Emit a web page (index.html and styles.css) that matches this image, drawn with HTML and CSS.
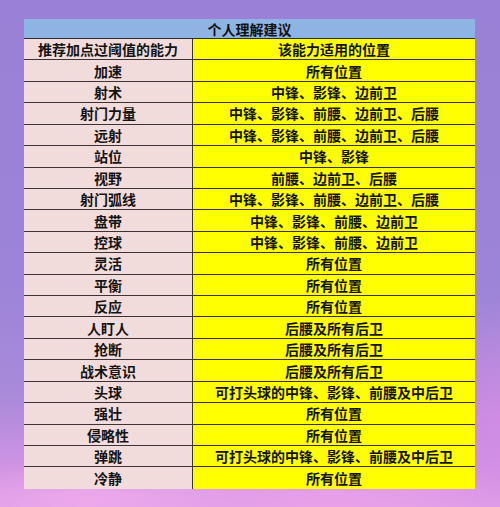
FILE: index.html
```html
<!DOCTYPE html>
<html lang="zh">
<head>
<meta charset="utf-8">
<link rel="stylesheet" href="styles.css">
</head>
<body>
<div class="page">
  <div class="sheet">
    <div class="title">个人理解建议</div>
    <div class="cell left">推荐加点过阈值的能力</div><div class="cell right">该能力适用的位置</div>
    <div class="cell left">加速</div><div class="cell right">所有位置</div>
    <div class="cell left">射术</div><div class="cell right">中锋、影锋、边前卫</div>
    <div class="cell left">射门力量</div><div class="cell right">中锋、影锋、前腰、边前卫、后腰</div>
    <div class="cell left">远射</div><div class="cell right">中锋、影锋、前腰、边前卫、后腰</div>
    <div class="cell left">站位</div><div class="cell right">中锋、影锋</div>
    <div class="cell left">视野</div><div class="cell right">前腰、边前卫、后腰</div>
    <div class="cell left">射门弧线</div><div class="cell right">中锋、影锋、前腰、边前卫、后腰</div>
    <div class="cell left">盘带</div><div class="cell right">中锋、影锋、前腰、边前卫</div>
    <div class="cell left">控球</div><div class="cell right">中锋、影锋、前腰、边前卫</div>
    <div class="cell left">灵活</div><div class="cell right">所有位置</div>
    <div class="cell left">平衡</div><div class="cell right">所有位置</div>
    <div class="cell left">反应</div><div class="cell right">所有位置</div>
    <div class="cell left">人盯人</div><div class="cell right">后腰及所有后卫</div>
    <div class="cell left">抢断</div><div class="cell right">后腰及所有后卫</div>
    <div class="cell left">战术意识</div><div class="cell right">后腰及所有后卫</div>
    <div class="cell left">头球</div><div class="cell right">可打头球的中锋、影锋、前腰及中后卫</div>
    <div class="cell left">强壮</div><div class="cell right">所有位置</div>
    <div class="cell left">侵略性</div><div class="cell right">所有位置</div>
    <div class="cell left">弹跳</div><div class="cell right">可打头球的中锋、影锋、前腰及中后卫</div>
    <div class="cell left last">冷静</div><div class="cell right last">所有位置</div>
  </div>
</div>
</body>
</html>
```
FILE: styles.css
```css
html, body {
  margin: 0;
  padding: 0;
}
body {
  width: 500px;
  height: 507px;
  overflow: hidden;
  font-family: "Noto Sans CJK SC", "Noto Sans", sans-serif;
}
.page {
  width: 500px;
  height: 507px;
  box-sizing: border-box;
  padding: 19px 0 0 24px;
  background:
    radial-gradient(ellipse 160px 40px at 90px 500px, rgba(240, 170, 235, 0.9), rgba(240, 170, 235, 0) 100%),
    radial-gradient(ellipse 200px 50px at 330px 505px, rgba(235, 160, 232, 0.9), rgba(235, 160, 232, 0) 100%),
    radial-gradient(ellipse 120px 120px at 500px 420px, rgba(215, 140, 230, 0.8), rgba(215, 140, 230, 0) 100%),
    linear-gradient(180deg, #9a80d6 0%, #9c84d8 55%, #a98ad9 78%, #cf93e3 92%, #dd9fe8 100%);
}
.sheet {
  display: grid;
  grid-template-columns: 169px 282px;
  grid-template-rows: 20px;
  grid-auto-rows: 21.43px;
  width: 451px;
}
.title {
  grid-column: 1 / 3;
  background: #8db4e2;
  border-bottom: 1px solid #2f2f3a;
  display: flex;
  align-items: center;
  justify-content: center;
  font-size: 14px;
  font-weight: 700;
  color: #111;
  line-height: 1;
}
.cell {
  display: flex;
  align-items: center;
  justify-content: center;
  font-size: 14px;
  font-weight: 700;
  color: #141414;
  line-height: 1;
  border-bottom: 1px solid #3a3438;
  box-sizing: border-box;
}
.left {
  background: #f2dcdb;
  border-right: 1px solid #3a3438;
}
.right {
  background: #ffff00;
}
.last {
  border-bottom: none;
}
```
